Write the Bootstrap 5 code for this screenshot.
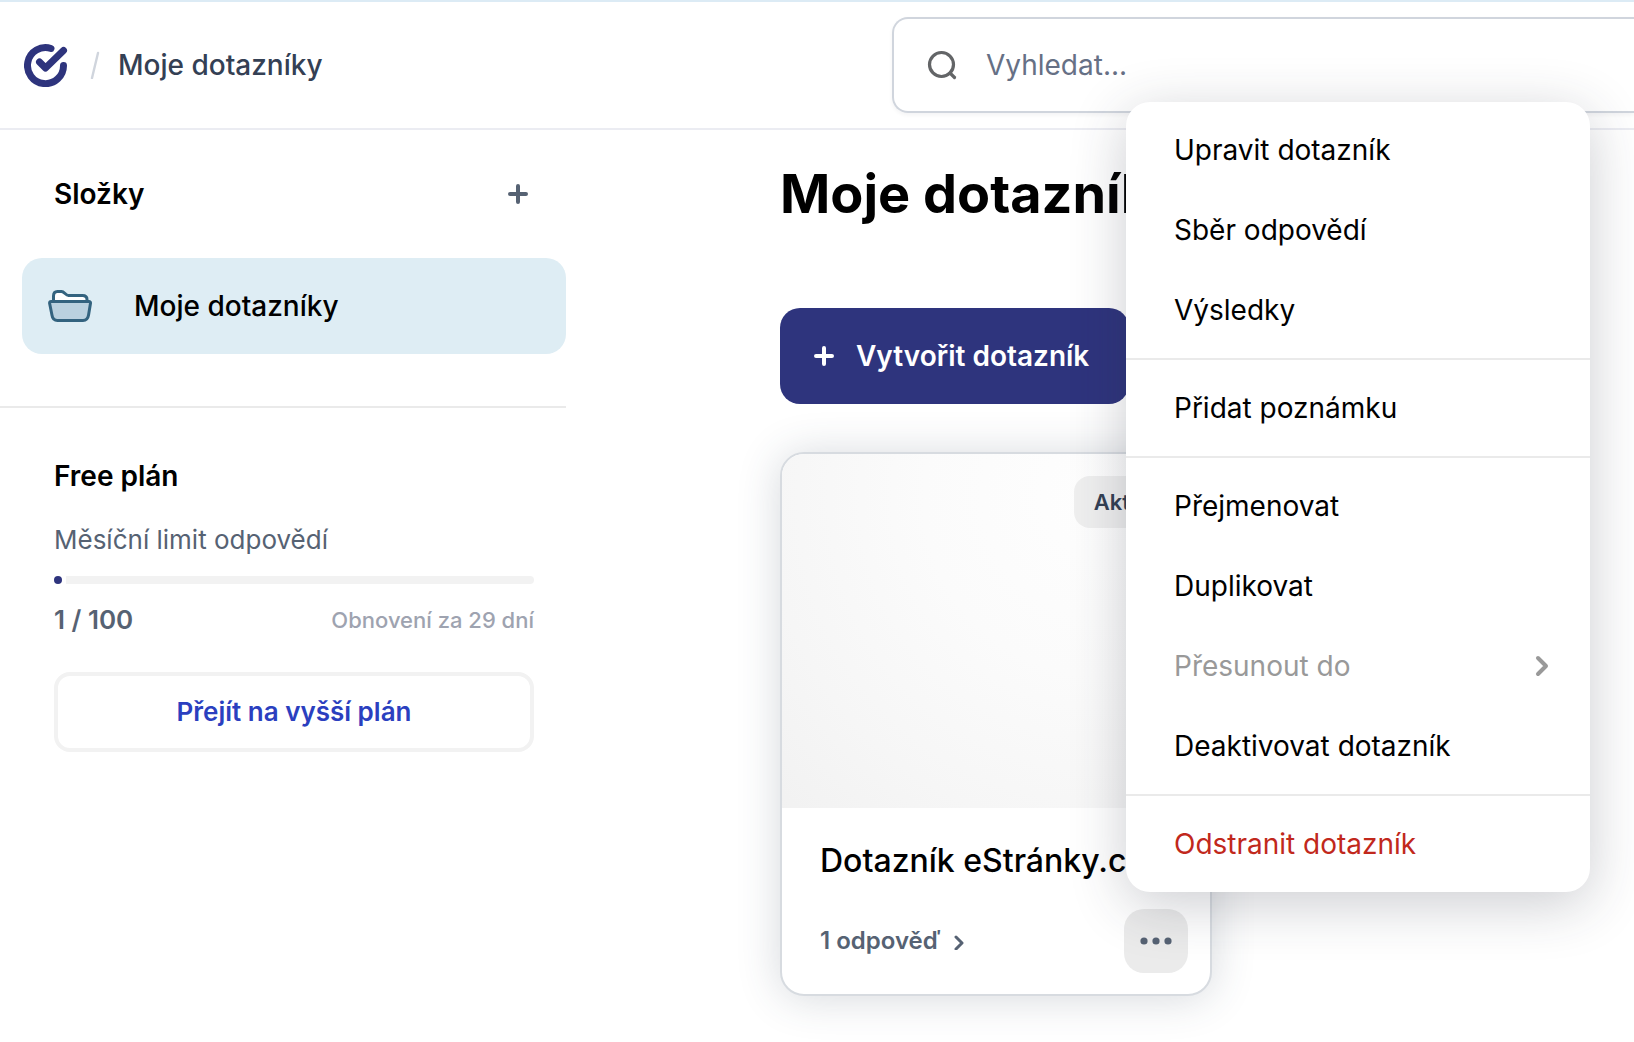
<!DOCTYPE html>
<html lang="cs">
<head>
<meta charset="utf-8">
<meta name="viewport" content="width=device-width, initial-scale=1">
<title>Moje dotazníky</title>
<link href="https://cdn.jsdelivr.net/npm/bootstrap@5.3.0/dist/css/bootstrap.min.css" rel="stylesheet">
<style>
  :root { --navy: #2e347d; --slate: #566273; --line: #eaeaea; }
  body { font-family: Inter, "Liberation Sans", sans-serif; font-size: 28px; line-height: 40px; color: #000; background: #fff; overflow-x: hidden; }
  svg { display: block; flex: none; fill: none; stroke-linecap: round; stroke-linejoin: round; }
  .topbar { height: 130px; border-top: 2px solid #dcebf5; border-bottom: 2px solid #ebecf2; padding-left: 24px; }
  .crumbs { flex: 0 0 868px; }
  .crumbs .page-name { color: #344054; font-weight: 500; }
  .search-box { height: 96px; border: 2px solid #d0d5dd; border-right: 0; border-radius: 16px 0 0 16px; padding-left: 33px; gap: 29px; box-shadow: 0 2px 4px rgba(16,24,40,.05); }
  .search-box input { border: 0; outline: 0; background: transparent; color: #344054; padding: 0; min-width: 0; }
  .search-box input::placeholder { color: #667085; opacity: 1; }
  .side { flex: 0 0 566px; }
  .side-top { padding: 44px 0 52px 22px; border-bottom: 2px solid var(--line); }
  .side-title { font-size: 28px; line-height: 40px; font-weight: 600; margin: 0; }
  .side-head { padding: 0 36px 0 32px; margin-bottom: 44px; }
  .folder { height: 96px; border-radius: 20px; background: #deedf4; color: #000; font-weight: 500; padding-left: 26px; gap: 42px; text-decoration: none; }
  .plan { padding: 48px 32px 0 54px; }
  .plan-label { font-size: 26px; color: var(--slate); margin-top: 24px; }
  .meter { height: 8px; border-radius: 4px; background: #f2f2f2; margin-top: 16px; }
  .meter-fill { height: 8px; min-width: 12px; background: #fff; }
  .meter-fill::before { content: ""; display: block; width: 8px; height: 8px; border-radius: 4px; background: var(--navy); }
  .plan-stats { margin-top: 16px; color: var(--slate); font-size: 26px; font-weight: 600; }
  .plan-stats .renew { font-size: 22px; font-weight: 500; color: #9ea3b0; }
  .upgrade { margin-top: 32px; height: 80px; border: 4px solid #f2f2f2; border-radius: 16px; background: #fff; color: #2b3fbf; font-size: 26px; font-weight: 600; }
  .content { padding: 28px 44px 46px 214px; }
  .content h1 { font-size: 54px; line-height: 72px; font-weight: 700; margin: 0 0 78px; }
  .create { height: 96px; border: 0; border-radius: 20px; background: var(--navy); color: #fff; font-size: 28px; font-weight: 600; padding: 0 40px 0 32px; gap: 20px; }
  .survey { width: 432px; margin-top: 48px; border: 2px solid #d7dbe0; border-radius: 24px; background: #fff; box-shadow: 0 2px 44px rgba(52,64,84,.2); }
  .thumb { height: 354px; padding: 22px; border-radius: 22px 22px 0 0; background: radial-gradient(circle at 75% 12%, #fefefe 0%, #fbfbfb 40%, #f6f6f6 75%, #efefef 115%); }
  .status { height: 52px; border-radius: 16px; background: #efefef; color: #344054; font-size: 22px; font-weight: 600; padding: 0 20px; }
  .survey-body { padding: 31px 22px 21px 38px; }
  .survey-body h2 { font-size: 32px; line-height: 44px; font-weight: 500; margin: 0 0 26px; white-space: nowrap; }
  .answers { color: var(--slate); font-size: 24px; font-weight: 600; text-decoration: none; gap: 12px; }
  .more { width: 64px; height: 64px; border: 0; border-radius: 20px; background: #ebebeb; }
  .actions.dropdown-menu { left: 2px; bottom: 100%; margin: 0 0 17px; width: 464px; padding: 0; border: 0; border-radius: 24px; font-size: 28px; box-shadow: 0 12px 56px rgba(40,48,64,.24); }
  .actions .group { padding: 8px 0; }
  .actions .group + .group { border-top: 2px solid var(--line); }
  .actions .dropdown-item { height: 80px; padding: 0 36px 0 48px; color: #000; }
  .actions .dropdown-item:disabled { color: #999; }
  .actions .dropdown-item.remove { color: #c1281c; }
</style>
<script src="https://cdn.jsdelivr.net/npm/bootstrap@5.3.0/dist/js/bootstrap.bundle.min.js"></script>
</head>
<body>
<header class="topbar d-flex align-items-center">
  <nav class="crumbs d-flex align-items-center" aria-label="Navigace">
    <a href="#" aria-label="Domů"><svg width="44" height="44" viewBox="0 0 44 44" stroke="#2e347d" stroke-width="7"><path d="M27 5.500A18 18 0 1 0 39.500 22.500"/><path d="M15.500 19l6 6L39.500 7.500"/></svg></a>
    <svg class="ms-3 me-2" width="22" height="28" viewBox="0 0 22 28" stroke="#d0d5dd" stroke-width="2.400"><path d="M14 2L8 27"/></svg>
    <span class="page-name ms-1">Moje dotazníky</span>
  </nav>
  <label class="search-box d-flex align-items-center flex-grow-1">
    <svg width="30" height="30" viewBox="0 0 30 30" stroke="#636567" stroke-width="3.200"><circle cx="14.500" cy="14.500" r="12"/><path d="M23 23l4.500 4.500"/></svg>
    <input type="search" class="flex-grow-1" placeholder="Vyhledat..." aria-label="Vyhledat">
  </label>
</header>

<div class="d-flex">
  <aside class="side">
    <div class="side-top">
      <div class="side-head d-flex align-items-center justify-content-between">
        <h2 class="side-title">Složky</h2>
        <button type="button" class="btn p-0 border-0" aria-label="Přidat složku"><svg width="24" height="24" viewBox="0 0 24 24" stroke="#566273" stroke-width="4"><path d="M12 4v16M4 12h16"/></svg></button>
      </div>
      <a href="#" class="folder d-flex align-items-center">
        <svg width="44" height="32" viewBox="0 0 44 32" stroke="#33637f" stroke-width="3"><path d="M5.500 12V6c0-3 1.500-4.500 4-4.500h4c3 0 4 4 7 4h14c3 0 4.500 1.500 4.500 4V12z" fill="#fff"/><path d="M3 11.500h38c1 0 1.600.7 1.500 1.800l-2 12c-.6 3.500-2.500 5.200-5.500 5.200H9.500c-3 0-5-1.700-5.500-5.200l-2.400-12c-.1-1.100.4-1.800 1.400-1.800z" fill="#bad1df"/></svg>
        <span>Moje dotazníky</span>
      </a>
    </div>
    <section class="plan">
      <h2 class="side-title">Free plán</h2>
      <div class="plan-label">Měsíční limit odpovědí</div>
      <div class="meter" role="progressbar" aria-label="Měsíční limit odpovědí" aria-valuenow="1" aria-valuemin="0" aria-valuemax="100"><div class="meter-fill" style="width: 1%"></div></div>
      <div class="plan-stats d-flex align-items-center justify-content-between">
        <span>1 / 100</span><span class="renew">Obnovení za 29 dní</span>
      </div>
      <button type="button" class="upgrade w-100">Přejít na vyšší plán</button>
    </section>
  </aside>

  <main class="content flex-grow-1">
    <h1>Moje dotazníky</h1>
    <button type="button" class="create d-flex align-items-center">
      <svg width="24" height="24" viewBox="0 0 24 24" stroke="#fff" stroke-width="4"><path d="M12 4v16M4 12h16"/></svg>
      <span>Vytvořit dotazník</span>
    </button>
    <article class="survey">
      <div class="thumb d-flex justify-content-end align-items-start"><span class="status d-flex align-items-center">Aktivní</span></div>
      <div class="survey-body">
        <h2>Dotazník eStránky.cz</h2>
        <div class="d-flex align-items-center justify-content-between">
          <a href="#" class="answers d-flex align-items-center"><span>1 odpověď</span>
            <svg width="12" height="18" viewBox="0 0 12 18" stroke="#566273" stroke-width="3"><path d="M3 5l6 6-6 6"/></svg></a>
          <div class="dropup">
            <button type="button" class="more d-flex align-items-center justify-content-center" aria-label="Další akce" aria-expanded="true"><svg width="32" height="8" viewBox="0 0 32 8"><g fill="#566273"><circle cx="4" cy="4" r="3.600"/><circle cx="16" cy="4" r="3.600"/><circle cx="28" cy="4" r="3.600"/></g></svg></button>
            <div class="actions dropdown-menu show">
              <div class="group">
                <button type="button" class="dropdown-item">Upravit dotazník</button>
                <button type="button" class="dropdown-item">Sběr odpovědí</button>
                <button type="button" class="dropdown-item">Výsledky</button>
              </div>
              <div class="group">
                <button type="button" class="dropdown-item">Přidat poznámku</button>
              </div>
              <div class="group">
                <button type="button" class="dropdown-item">Přejmenovat</button>
                <button type="button" class="dropdown-item">Duplikovat</button>
                <button type="button" class="dropdown-item d-flex align-items-center justify-content-between" disabled>Přesunout do
                  <svg width="24" height="24" viewBox="0 0 24 24" stroke="#999" stroke-width="4"><path d="M8 4l8 8-8 8"/></svg></button>
                <button type="button" class="dropdown-item">Deaktivovat dotazník</button>
              </div>
              <div class="group">
                <button type="button" class="dropdown-item remove">Odstranit dotazník</button>
              </div>
            </div>
          </div>
        </div>
      </div>
    </article>
  </main>
</div>
</body>
</html>
